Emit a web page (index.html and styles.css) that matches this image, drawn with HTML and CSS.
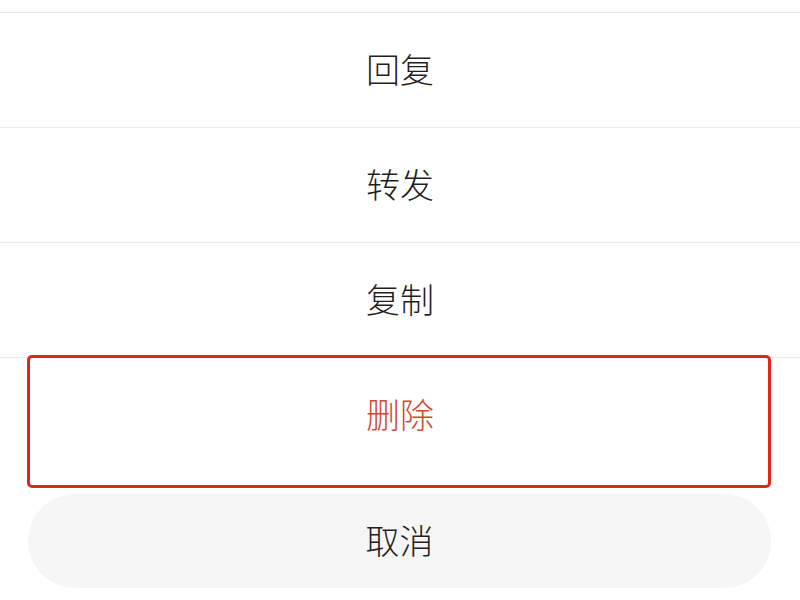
FILE: index.html
```html
<!DOCTYPE html>
<html lang="zh-CN">
<head>
    <meta charset="UTF-8">
    <meta name="viewport" content="width=device-width, initial-scale=1.0">
    <title>操作菜单</title>
    <link rel="stylesheet" href="styles.css">
</head>
<body>
    <div class="sheet">
        <ul class="action-list">
            <li class="action-item action-top"></li>
            <li class="action-item">回复</li>
            <li class="action-item">转发</li>
            <li class="action-item">复制</li>
            <li class="action-item action-danger">
                删除
                <span class="highlight"></span>
            </li>
        </ul>
        <div class="cancel-wrap">
            <button class="cancel-btn">取消</button>
        </div>
    </div>
</body>
</html>
```

FILE: styles.css
```css
body {
    margin: 0;
    padding: 0;
    background-color: #fff;
    font-family: "Noto Sans CJK SC", "Noto Sans", sans-serif;
    width: 800px;
    height: 600px;
    overflow: hidden;
}

.sheet {
    background-color: #fff;
}

.action-list {
    list-style: none;
    margin: 0;
    padding: 0;
}

.action-item {
    height: 111px;
    padding-bottom: 3px;
    display: flex;
    align-items: center;
    justify-content: center;
    font-size: 34px;
    font-weight: 300;
    color: #1f1f1f;
    border-bottom: 1px solid #ebebeb;
}

.action-top {
    height: 12px;
    padding-bottom: 0;
}

.action-danger {
    position: relative;
    color: #d4472f;
    border-bottom: none;
}

.highlight {
    position: absolute;
    top: -3px;
    left: 27px;
    right: 29px;
    bottom: -16px;
    border: 3px solid #e3241b;
    border-radius: 5px;
}

.cancel-wrap {
    padding: 22px 29px 0 28px;
}

.cancel-btn {
    display: block;
    width: 100%;
    height: 94px;
    border: none;
    border-radius: 47px;
    background-color: #f5f5f5;
    font-family: inherit;
    font-size: 34px;
    font-weight: 300;
    color: #1f1f1f;
    padding: 0 0 4px;
}
```
